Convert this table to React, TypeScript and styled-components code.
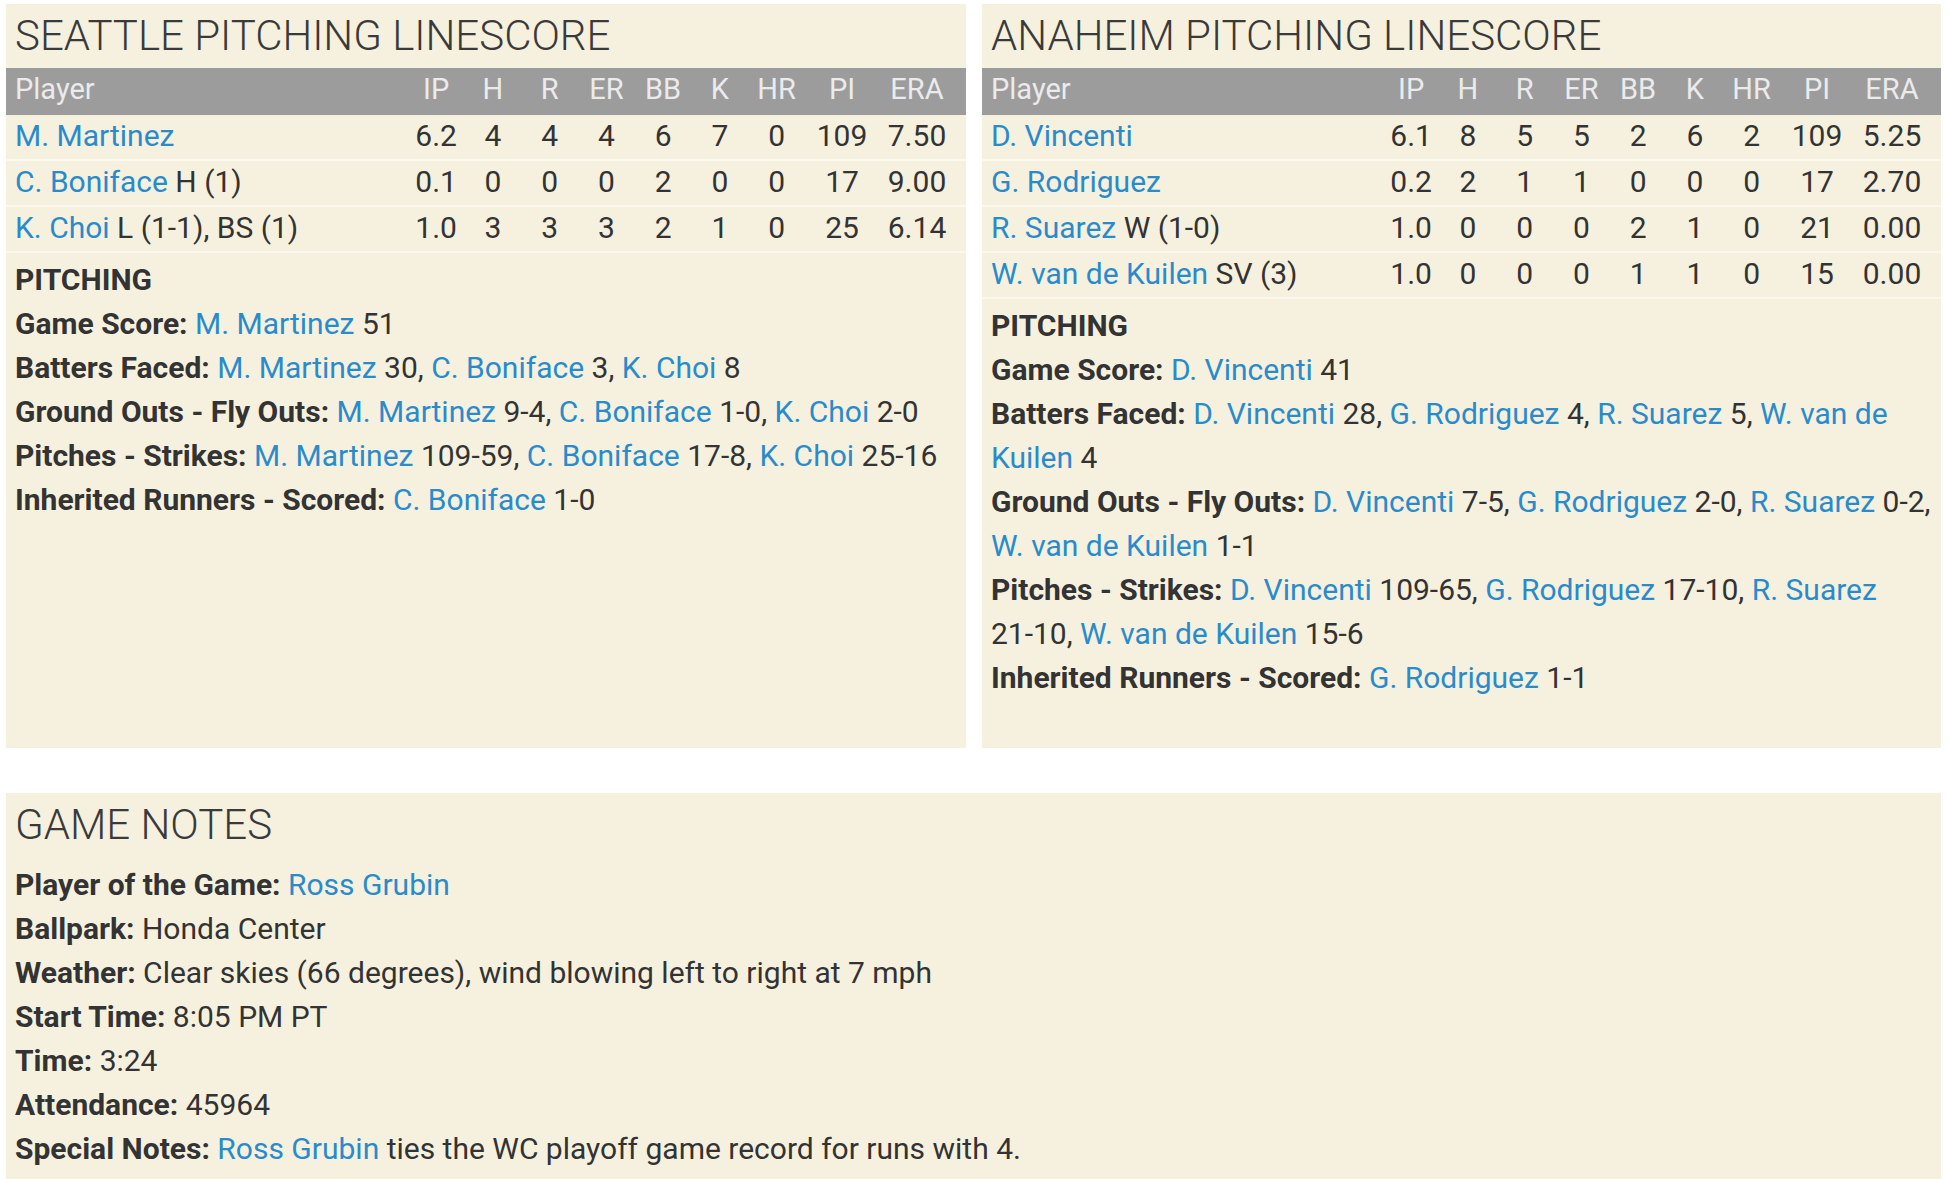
import styled, { createGlobalStyle } from 'styled-components'

const GlobalStyle = createGlobalStyle`
  body {
    margin: 0;
    background: #ffffff;
    font-family: Roboto, "Liberation Sans", sans-serif;
    color: #333333;
  }
`

type Pitcher = {
  name: string
  note?: string
  stats: string[]
}

type Part = { link?: string; text?: string }

type Line = { label: string; parts: Part[] }

const COLUMNS = ['IP', 'H', 'R', 'ER', 'BB', 'K', 'HR', 'PI', 'ERA']

const seattle: Pitcher[] = [
  { name: 'M. Martinez', stats: ['6.2', '4', '4', '4', '6', '7', '0', '109', '7.50'] },
  { name: 'C. Boniface', note: 'H (1)', stats: ['0.1', '0', '0', '0', '2', '0', '0', '17', '9.00'] },
  { name: 'K. Choi', note: 'L (1-1), BS (1)', stats: ['1.0', '3', '3', '3', '2', '1', '0', '25', '6.14'] },
]

const anaheim: Pitcher[] = [
  { name: 'D. Vincenti', stats: ['6.1', '8', '5', '5', '2', '6', '2', '109', '5.25'] },
  { name: 'G. Rodriguez', stats: ['0.2', '2', '1', '1', '0', '0', '0', '17', '2.70'] },
  { name: 'R. Suarez', note: 'W (1-0)', stats: ['1.0', '0', '0', '0', '2', '1', '0', '21', '0.00'] },
  { name: 'W. van de Kuilen', note: 'SV (3)', stats: ['1.0', '0', '0', '0', '1', '1', '0', '15', '0.00'] },
]

const seattleNotes: Line[] = [
  { label: 'Game Score:', parts: [{ link: 'M. Martinez' }, { text: ' 51' }] },
  {
    label: 'Batters Faced:',
    parts: [{ link: 'M. Martinez' }, { text: ' 30, ' }, { link: 'C. Boniface' }, { text: ' 3, ' }, { link: 'K. Choi' }, { text: ' 8' }],
  },
  {
    label: 'Ground Outs - Fly Outs:',
    parts: [{ link: 'M. Martinez' }, { text: ' 9-4, ' }, { link: 'C. Boniface' }, { text: ' 1-0, ' }, { link: 'K. Choi' }, { text: ' 2-0' }],
  },
  {
    label: 'Pitches - Strikes:',
    parts: [{ link: 'M. Martinez' }, { text: ' 109-59, ' }, { link: 'C. Boniface' }, { text: ' 17-8, ' }, { link: 'K. Choi' }, { text: ' 25-16' }],
  },
  { label: 'Inherited Runners - Scored:', parts: [{ link: 'C. Boniface' }, { text: ' 1-0' }] },
]

const anaheimNotes: Line[] = [
  { label: 'Game Score:', parts: [{ link: 'D. Vincenti' }, { text: ' 41' }] },
  {
    label: 'Batters Faced:',
    parts: [
      { link: 'D. Vincenti' }, { text: ' 28, ' }, { link: 'G. Rodriguez' }, { text: ' 4, ' },
      { link: 'R. Suarez' }, { text: ' 5, ' }, { link: 'W. van de Kuilen' }, { text: ' 4' },
    ],
  },
  {
    label: 'Ground Outs - Fly Outs:',
    parts: [
      { link: 'D. Vincenti' }, { text: ' 7-5, ' }, { link: 'G. Rodriguez' }, { text: ' 2-0, ' },
      { link: 'R. Suarez' }, { text: ' 0-2, ' }, { link: 'W. van de Kuilen' }, { text: ' 1-1' },
    ],
  },
  {
    label: 'Pitches - Strikes:',
    parts: [
      { link: 'D. Vincenti' }, { text: ' 109-65, ' }, { link: 'G. Rodriguez' }, { text: ' 17-10, ' },
      { link: 'R. Suarez' }, { text: ' 21-10, ' }, { link: 'W. van de Kuilen' }, { text: ' 15-6' },
    ],
  },
  { label: 'Inherited Runners - Scored:', parts: [{ link: 'G. Rodriguez' }, { text: ' 1-1' }] },
]

const gameNotes: Line[] = [
  { label: 'Player of the Game:', parts: [{ link: 'Ross Grubin' }] },
  { label: 'Ballpark:', parts: [{ text: 'Honda Center' }] },
  { label: 'Weather:', parts: [{ text: 'Clear skies (66 degrees), wind blowing left to right at 7 mph' }] },
  { label: 'Start Time:', parts: [{ text: '8:05 PM PT' }] },
  { label: 'Time:', parts: [{ text: '3:24' }] },
  { label: 'Attendance:', parts: [{ text: '45964' }] },
  { label: 'Special Notes:', parts: [{ link: 'Ross Grubin' }, { text: ' ties the WC playoff game record for runs with 4.' }] },
]

const Page = styled.div`
  display: flex;
  flex-direction: column;
  gap: 45px;
  padding: 4px 8px 0 6px;
`

const TopRow = styled.div`
  display: grid;
  grid-template-columns: 960px 959px;
  gap: 16px;
`

const Panel = styled.section<{ $height: number }>`
  background: #f6f1df;
  min-height: ${(p) => p.$height}px;
`

const Title = styled.h2`
  margin: 0;
  padding: 0 9px;
  height: 64px;
  line-height: 63px;
  font-size: 42px;
  font-weight: 300;
  color: #3a3a3a;
  white-space: nowrap;
`

const StatRow = styled.div<{ $head?: boolean }>`
  display: grid;
  grid-template-columns: 1fr repeat(7, 56.75px) 74px 76px;
  align-items: center;
  padding: 0 11px ${(p) => (p.$head ? 5 : 3)}px 9px;
  height: ${(p) => (p.$head ? 47 : 46)}px;
  font-size: ${(p) => (p.$head ? 29 : 30)}px;
  background: ${(p) => (p.$head ? '#9c9c9c' : 'transparent')};
  color: ${(p) => (p.$head ? '#ebebeb' : '#333333')};
  border-bottom: ${(p) => (p.$head ? 'none' : '2px solid #fbf8ef')};
  box-sizing: border-box;
`

const Cell = styled.span`
  text-align: center;
`

const NameCell = styled.span`
  white-space: nowrap;
`

const Link = styled.a`
  color: #2a8bcb;
  text-decoration: none;
`

const Value = styled.span`
  white-space: nowrap;
`

const Notes = styled.div<{ $top: number }>`
  padding: ${(p) => p.$top}px 2px 0 9px;
  font-size: 30px;
  line-height: 44px;
`

const SubHead = styled.div`
  font-weight: 700;
  text-transform: uppercase;
`

const Label = styled.b`
  font-weight: 700;
`

const renderPart = (p: Part, i: number) => {
  if (p.link) return <Link key={i}>{p.link}</Link>
  const text = p.text ?? ''
  return (
    <span key={i}>
      {text.startsWith(' ') ? ' ' : ''}
      <Value>{text.trim()}</Value>
      {text.endsWith(' ') ? ' ' : ''}
    </span>
  )
}

const NoteLine = ({ line }: { line: Line }) => (
  <div>
    <Label>{line.label}</Label> {line.parts.map(renderPart)}
  </div>
)

const PitchingPanel = ({ team, pitchers, notes }: { team: string; pitchers: Pitcher[]; notes: Line[] }) => (
  <Panel $height={744}>
    <Title>{team} PITCHING LINESCORE</Title>
    <StatRow $head>
      <NameCell>Player</NameCell>
      {COLUMNS.map((c) => (
        <Cell key={c}>{c}</Cell>
      ))}
    </StatRow>
    {pitchers.map((p) => (
      <StatRow key={p.name}>
        <NameCell>
          <Link>{p.name}</Link>
          {p.note ? ` ${p.note}` : ''}
        </NameCell>
        {p.stats.map((s, i) => (
          <Cell key={i}>{s}</Cell>
        ))}
      </StatRow>
    ))}
    <Notes $top={5}>
      <SubHead>Pitching</SubHead>
      {notes.map((l) => (
        <NoteLine key={l.label} line={l} />
      ))}
    </Notes>
  </Panel>
)

const App = () => (
  <>
    <GlobalStyle />
    <Page>
      <TopRow>
        <PitchingPanel team="SEATTLE" pitchers={seattle} notes={seattleNotes} />
        <PitchingPanel team="ANAHEIM" pitchers={anaheim} notes={anaheimNotes} />
      </TopRow>
      <Panel $height={386}>
        <Title>GAME NOTES</Title>
        <Notes $top={6}>
          {gameNotes.map((l) => (
            <NoteLine key={l.label} line={l} />
          ))}
        </Notes>
      </Panel>
    </Page>
  </>
)

export default App
